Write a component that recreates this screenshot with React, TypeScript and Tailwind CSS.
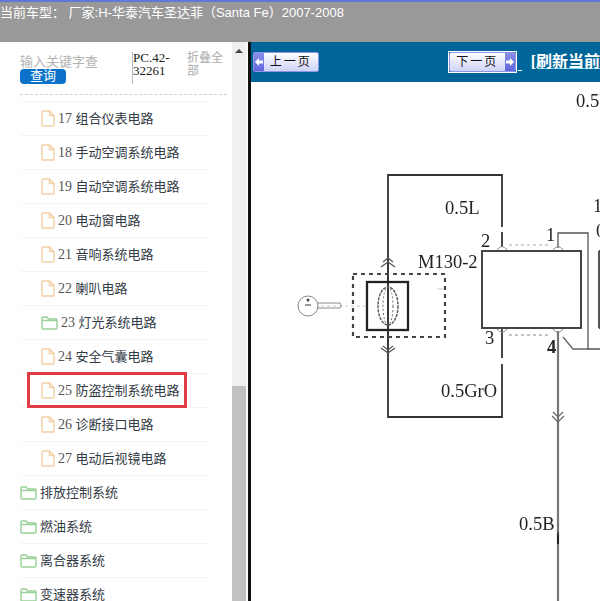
import React from "react";

const File = () => (
  <svg width="14" height="17" viewBox="0 0 14 17" fill="none" stroke="#f3cfa5" strokeWidth="1.4" className="shrink-0">
    <path d="M1 2.2Q1 1 2.2 1H8.5L13 5.5V14.8Q13 16 11.8 16H2.2Q1 16 1 14.8Z" />
    <path d="M8.5 1V5.5H13" />
  </svg>
);

const Folder = () => (
  <svg width="17" height="14" viewBox="0 0 17 14" fill="none" stroke="#97d197" strokeWidth="1.4" className="shrink-0">
    <path d="M1 2.2Q1 1 2.2 1H6L7.5 3H15Q16 3 16 4V12Q16 13 15 13H2.2Q1 13 1 12Z" />
    <path d="M1 4.5H16" />
  </svg>
);

type RowT = { n?: string; t: string; kind: "file" | "folder"; hl?: boolean };

const rows: RowT[] = [
  { n: "17", t: "组合仪表电路", kind: "file" },
  { n: "18", t: "手动空调系统电路", kind: "file" },
  { n: "19", t: "自动空调系统电路", kind: "file" },
  { n: "20", t: "电动窗电路", kind: "file" },
  { n: "21", t: "音响系统电路", kind: "file" },
  { n: "22", t: "喇叭电路", kind: "file" },
  { n: "23", t: "灯光系统电路", kind: "folder" },
  { n: "24", t: "安全气囊电路", kind: "file" },
  { n: "25", t: "防盗控制系统电路", kind: "file", hl: true },
  { n: "26", t: "诊断接口电路", kind: "file" },
  { n: "27", t: "电动后视镜电路", kind: "file" },
  { t: "排放控制系统", kind: "folder" },
  { t: "燃油系统", kind: "folder" },
  { t: "离合器系统", kind: "folder" },
  { t: "变速器系统", kind: "folder" },
];

const Row = ({ r }: { r: RowT }) => (
  <div className={`relative h-[34px] shrink-0 flex items-center gap-[3px] border-b border-[#f5f5f5] text-[13px] text-[#333b45] ${r.n ? "pl-[21px]" : "pl-0"}`}>
    {r.hl && <div className="absolute left-[7px] top-[-2px] w-[160px] h-[36px] border-[3px] border-[#e23c46]" />}
    {r.kind === "file" ? <File /> : <Folder />}
    <span className="whitespace-nowrap">
      {r.n && <span className="font-['Liberation_Serif'] text-[#555] text-[14px]">{r.n} </span>}
      {r.t}
    </span>
  </div>
);

const Diagram = () => (
  <svg width="350" height="519" viewBox="250 82 350 519" className="block blur-[0.4px]" fontFamily="'Liberation Serif', serif" fill="#222">
    <g fill="none" stroke="#333" strokeWidth="1.8">
      <path d="M387 258V175H501V227" />
      <path d="M501 232V247" />
      <path d="M501 329V358" />
      <path d="M501 364V417H387V353" />
      <path d="M387 258V353" stroke="#222" />
      <path d="M557 248V233H587V349H600" strokeWidth="1.3" stroke="#555" />
      <path d="M562 337L572 349H588" strokeWidth="1.3" stroke="#666" />
      <rect x="366" y="282" width="41" height="48" strokeWidth="2.3" stroke="#222" />
      <rect x="352" y="274" width="92" height="63" strokeWidth="2.2" strokeDasharray="4 4" stroke="#444" />
      <rect x="481" y="251" width="99" height="77" strokeWidth="2" stroke="#444" />
      <path d="M598 251V328" strokeWidth="2" stroke="#555" />
      <path d="M598 251H600M598 328H600" strokeWidth="2" stroke="#444" />
      <path d="M557 331V601" strokeWidth="2.2" stroke="#777" />
      <ellipse cx="387" cy="306" rx="10" ry="19" strokeWidth="1.4" stroke="#555" strokeDasharray="3 1" />
      <ellipse cx="387" cy="306" rx="5" ry="19" strokeWidth="1" strokeDasharray="2 2" stroke="#666" />
      <path d="M382 262L387 258L392 262M380 267L387 262L394 267" strokeWidth="1.2" stroke="#555" />
      <path d="M382 346L387 350L392 346M380 348L387 353L394 348" strokeWidth="1.2" stroke="#555" />
      <path d="M552 412L557 417L562 412M551 416L557 422L563 416" strokeWidth="1.2" stroke="#666" />
      <path d="M508 245H550" strokeWidth="1" strokeDasharray="3 3" stroke="#aaa" />
      <path d="M508 335H550" strokeWidth="1.2" strokeDasharray="3 3" stroke="#888" />
      <path d="M496 250Q501 243 506 250M552 250Q557 243 562 250M496 329Q501 336 506 329M552 329Q557 336 562 329" strokeWidth="1" stroke="#888" />
      <path d="M320 306H366" strokeWidth="0.8" strokeDasharray="3 3" stroke="#bbb" />
      <path d="M436 289H442" strokeWidth="0.8" stroke="#bbb" />
      <circle cx="307" cy="306" r="10" strokeWidth="1" stroke="#888" />
      <path d="M316 303H339Q342 306 339 308H316" strokeWidth="1" stroke="#888" />
    </g>
    <circle cx="307" cy="300" r="1.5" fill="#444" />
    <path d="M304 304H310V306H304Z" fill="#999" />
    <path d="M556 536L557 530L558 536V544H556Z" fill="#222" />
    <g fontSize="18.5">
      <text x="444" y="214">0.5L</text>
      <text x="417" y="268">M130-2</text>
      <text x="480" y="247">2</text>
      <text x="545" y="241">1</text>
      <text x="484" y="344">3</text>
      <text x="546" y="353" fontWeight="700">4</text>
      <text x="440" y="397">0.5GrO</text>
      <text x="518" y="530">0.5B</text>
      <text x="575" y="107">0.5Y</text>
      <text x="592" y="212">10</text>
      <text x="595" y="237">0</text>
    </g>
  </svg>
);

const NavBtn = ({ label, side }: { label: string; side: "l" | "r" }) => (
  <div className={`w-[67px] h-[20px] flex items-center rounded-[2px] border border-[#8f96e6] bg-gradient-to-b from-[#ffffff] to-[#cfd3f7] text-[12px] text-[#111] ${side === "r" ? "flex-row-reverse" : ""}`}>
    <div className="w-[10px] h-full bg-gradient-to-b from-[#8a8fe8] to-[#5f66dc] flex items-center justify-center text-white shrink-0">
      <svg width="8" height="8" viewBox="0 0 8 8" fill="#fff">
        {side === "l" ? <path d="M0 4L4 0V2.5H8V5.5H4V8Z" /> : <path d="M8 4L4 0V2.5H0V5.5H4V8Z" />}
      </svg>
    </div>
    <span className="flex-1 text-center tracking-[2px] whitespace-nowrap">{label}</span>
  </div>
);

export default function App() {
  return (
    <div className="w-[600px] h-[601px] overflow-hidden flex flex-col bg-white font-['Liberation_Sans','Noto_Sans_CJK_SC',sans-serif]">
      <div className="h-[42px] shrink-0 bg-[#999999] border-t-2 border-[#6079d6] text-white text-[13px] leading-[21px] whitespace-nowrap">
        当前车型： 厂家:H-华泰汽车圣达菲（Santa Fe）2007-2008
      </div>
      <div className="flex-1 flex min-h-0">
        <div className="w-[248px] shrink-0 flex min-h-0 overflow-hidden">
          <div className="w-[232px] shrink-0 pl-[20px] pr-[21px] flex flex-col overflow-hidden">
            <div className="h-[53px] shrink-0 relative flex border-b border-dashed border-[#c8d4d8] w-[207px]">
              <div className="w-[112px] shrink-0 pt-[12px]">
                <div className="text-[13px] leading-[15px] text-[#b3b3b3] whitespace-nowrap">输入关键字查</div>
                <div className="w-[46px] h-[15px] rounded-[4px] bg-[#0a72c9] text-white text-[13px] leading-[14px] text-center">查询</div>
              </div>
              <div className="w-[55px] shrink-0 h-[32px] mt-[10px] border-l border-[#bbb] font-['Liberation_Serif'] text-[13px] leading-[12.5px] text-[#222]">
                PC.42-
                <br />
                32261
              </div>
              <div className="w-[38px] pt-[10px] text-[12px] leading-[12.5px] text-[#aaa]">折叠全部</div>
            </div>
            <div className="h-[7px] shrink-0 border-b border-[#f5f5f5]" />
            {rows.map((r) => (
              <Row key={r.t} r={r} />
            ))}
          </div>
          <div className="w-[14px] shrink-0 bg-[#f0f0f0] flex flex-col">
            <div className="h-[344px] flex justify-center pt-[7px]">
              <div className="w-0 h-0 border-l-[4px] border-r-[4px] border-b-[4px] border-l-transparent border-r-transparent border-b-[#444]" />
            </div>
            <div className="flex-1 bg-[#c1c1c1]" />
          </div>
          <div className="w-[2px] shrink-0 bg-[#fafafa]" />
        </div>
        <div className="w-[3px] shrink-0 bg-[#111]" />
        <div className="flex-1 min-w-0 flex flex-col overflow-hidden">
          <div className="h-[40px] shrink-0 bg-[#006699] flex items-center pl-[2px] pb-[1px] font-['Liberation_Serif','Noto_Sans_CJK_SC',serif]">
            <NavBtn label="上一页" side="l" />
            <div className="ml-[129px] border border-white">
              <NavBtn label="下一页" side="r" />
            </div>
            <span className="w-[4px] h-[18px] ml-[1px] border-b border-white shrink-0" />
            <span className="ml-[9px] text-[16px] font-bold text-white underline decoration-[#7fd8f0] whitespace-nowrap">[刷新当前</span>
          </div>
          <Diagram />
        </div>
      </div>
    </div>
  );
}
